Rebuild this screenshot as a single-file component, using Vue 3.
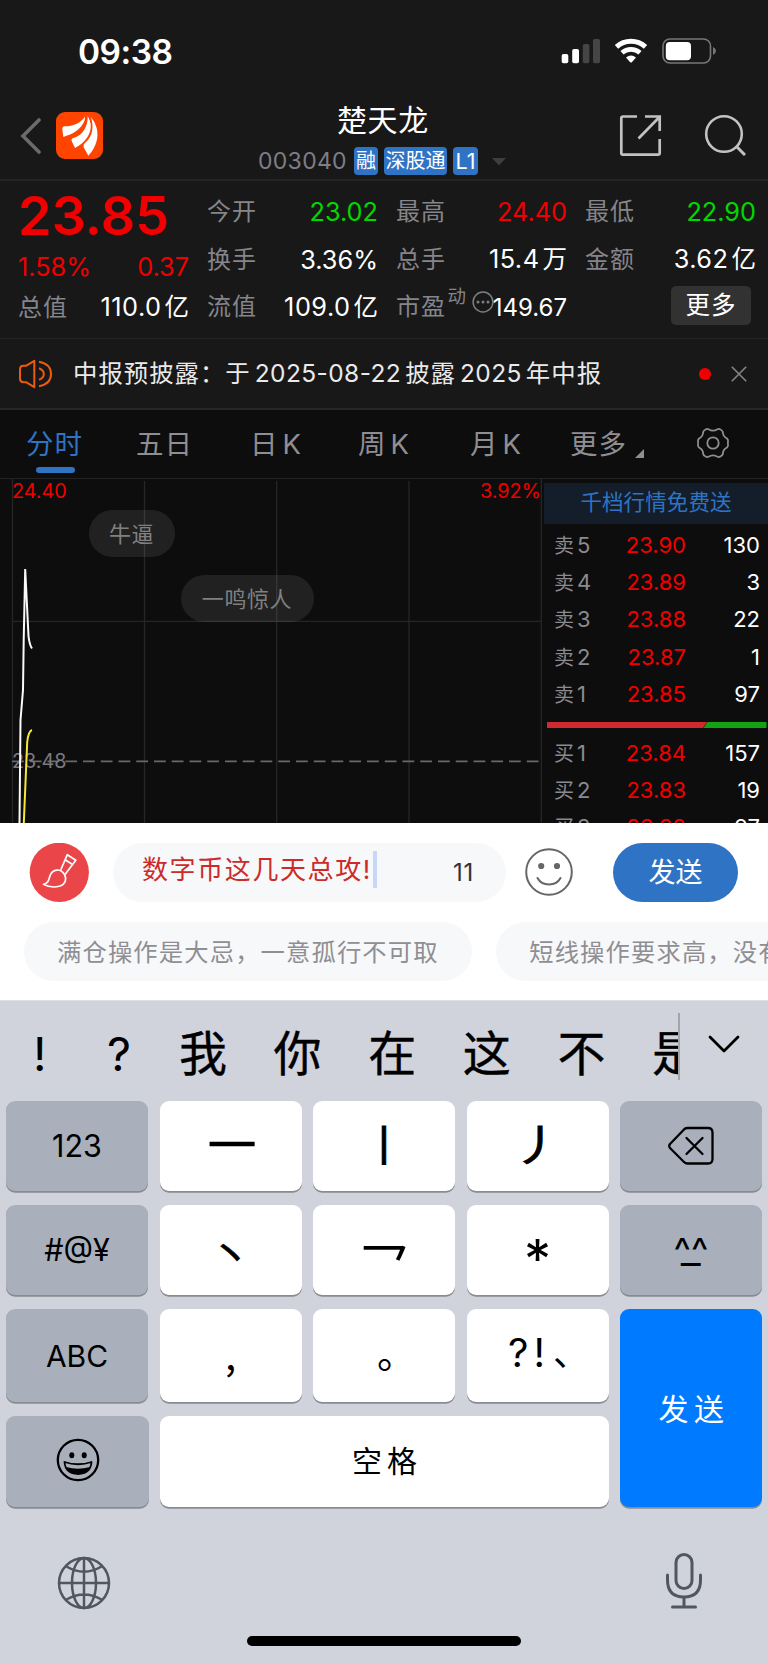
<script setup>
const columns = [
  [
    { label: '今开', value: '23.02', tone: 'green' },
    { label: '换手', value: '3.36%' },
    { label: '流值', value: '109.0', unit: '亿' },
  ],
  [
    { label: '最高', value: '24.40', tone: 'red' },
    { label: '总手', value: '15.4', unit: '万' },
    { label: '市盈', value: '149.67', sup: '动' },
  ],
  [
    { label: '最低', value: '22.90', tone: 'green' },
    { label: '金额', value: '3.62', unit: '亿' },
    { button: '更多' },
  ],
]
const sells = [
  ['5', '23.90', '130'],
  ['4', '23.89', '3'],
  ['3', '23.88', '22'],
  ['2', '23.87', '1'],
  ['1', '23.85', '97'],
]
const buys = [
  ['1', '23.84', '157'],
  ['2', '23.83', '19'],
  ['3', '23.82', '97'],
]
const candidates = ['我', '你', '在', '这', '不', '是']
</script>

<template>
  <div class="screen">
    <div class="status">
      <span class="clock">09:38</span>
      <svg class="status-icons" width="156" height="28" viewBox="0 0 156 28">
        <g fill="#fff">
          <rect x="1.7" y="17" width="6.6" height="9.2" rx="1.8" />
          <rect x="12.2" y="12" width="6.8" height="14.2" rx="1.8" />
          <rect x="22.8" y="7" width="6.6" height="19.2" rx="1.8" fill="#454545" />
          <rect x="33" y="2" width="7" height="24.2" rx="1.8" fill="#454545" />
        </g>
        <g fill="none" stroke="#fff" stroke-width="5">
          <path d="M56.500 9.800 A21.500 21.500 0 0 1 85.500 9.800" />
          <path d="M62 15.800 A13.500 13.500 0 0 1 80 15.800" stroke-width="4.600" />
        </g>
        <path d="M66 20.500 Q71 16.500 76 20.500 L71.800 25.200 Q71 26 70.200 25.200 Z" fill="#fff" />
        <rect x="103" y="2" width="47.500" height="24" rx="7" fill="none" stroke="#777" stroke-width="1.600" />
        <rect x="105.800" y="5" width="25.200" height="18.200" rx="4" fill="#fff" />
        <path d="M153 10 Q156 11.500 156 14 Q156 16.500 153 18 Z" fill="#777" />
      </svg>
    </div>

    <header class="header">
      <svg class="back" width="22" height="36" viewBox="0 0 22 36">
        <path d="M20 2 L4 18 L20 34" fill="none" stroke="#6b6b6b" stroke-width="3.600" stroke-linecap="round" />
      </svg>
      <svg class="logo" width="47" height="47" viewBox="0 0 141 141">
        <rect width="141" height="141" rx="27" fill="#ff4400" />
        <g fill="#fff">
          <path d="M19 52 Q18 44 26 43 C52 42 72 34 87 14 Q88 24 82 34 C68 58 48 66 22 75 Z" />
          <path d="M95 11 C96 45 80 70 50 79 Q45 81 47 87 L57 108 C85 94 108 66 104 36 Q101 22 95 11 Z" />
          <path d="M104 14 C114 42 112 72 86 94 Q80 100 83 106 L97 131 C121 106 129 75 122 48 Q116 27 104 14 Z" />
        </g>
      </svg>
      <div class="title">
        <h1>楚天龙</h1>
        <div class="sub">
          <span class="code">003040</span>
          <span class="badge b1">融</span>
          <span class="badge b2">深股通</span>
          <span class="badge b3">L1</span>
          <svg class="caret" width="14" height="8" viewBox="0 0 14 8"><path d="M0 0H14L7 7.500Z" fill="#3e3e3e" /></svg>
        </div>
      </div>
      <svg class="share" width="43" height="43" viewBox="0 0 43 43">
        <g fill="none" stroke="#c2c2c2" stroke-width="2.700">
          <path d="M18 2.500 H4 Q2.300 2.500 2.300 4.200 V39 Q2.300 40.700 4 40.700 H39 Q40.700 40.700 40.700 39 V25" />
          <path d="M26 2.500 H40.700 V17 M40 3.500 L19.500 24.500" />
        </g>
      </svg>
      <svg class="search" width="42" height="42" viewBox="0 0 42 42">
        <circle cx="20" cy="20" r="17.800" fill="none" stroke="#c2c2c2" stroke-width="2.600" />
        <path d="M32.500 32.500 L41 41" stroke="#c2c2c2" stroke-width="3" />
      </svg>
    </header>

    <section class="stats">
      <div class="col">
        <div class="price">23.85</div>
        <div class="row change red"><span>1.58%</span><span>0.37</span></div>
        <div class="row last"><span class="label">总值</span><span class="value wide">110.0<i>亿</i></span></div>
      </div>
      <div v-for="(col, c) in columns" :key="c" class="col">
        <div v-for="(cell, r) in col" :key="r" class="row">
          <template v-if="cell.button"><span class="more">{{ cell.button }}</span></template>
          <template v-else>
            <span class="label">{{ cell.label }}</span>
            <sup v-if="cell.sup" class="dyn">{{ cell.sup }}</sup>
            <svg v-if="cell.sup" class="dots" width="22" height="22" viewBox="0 0 22 22">
              <circle cx="11" cy="11" r="9.900" fill="none" stroke="#7e7e82" stroke-width="1.500" />
              <g fill="#7e7e82"><circle cx="6" cy="11" r="1.500" /><circle cx="11" cy="11" r="1.500" /><circle cx="16" cy="11" r="1.500" /></g>
            </svg>
            <span class="value" :class="[cell.tone, { small: cell.sup, wide: cell.unit }]">{{ cell.value }}<i v-if="cell.unit">{{ cell.unit }}</i></span>
          </template>
        </div>
      </div>
    </section>

    <section class="notice">
      <svg class="horn" width="35" height="30" viewBox="0 0 35 30">
        <g fill="none" stroke="#ee5a0c" stroke-width="2" stroke-linejoin="round">
          <path d="M16.300 1.800 L8 6.800 H5.500 Q2 6.800 2 10.200 V19.800 Q2 23.200 5.500 23.200 H8 L16.300 28.200 Z" />
          <path d="M21 9.200 Q25.800 11 25.800 15 Q25.800 19 21 20.800 M21 2.800 Q33 5 33 15 Q33 25 21 27.200" />
        </g>
      </svg>
      <p>中报预披露：于<b>2025-08-22</b>披露<b>2025</b>年中报</p>
      <span class="red-dot"></span>
      <svg class="close" width="16" height="16" viewBox="0 0 16 16"><path d="M0.800 0.800 L15.200 15.200 M15.200 0.800 L0.800 15.200" stroke="#858585" stroke-width="1.600" /></svg>
    </section>

    <nav class="tabs">
      <span class="tab t1">分时</span>
      <span class="tab t2">五日</span>
      <span class="tab t3">日<i>K</i></span>
      <span class="tab t4">周<i>K</i></span>
      <span class="tab t5">月<i>K</i></span>
      <span class="tab t6">更多<svg width="9" height="9" viewBox="0 0 9 9"><path d="M9 0 V9 H0 Z" fill="#8e8e93" /></svg></span>
      <svg class="gear" width="34" height="32" viewBox="0 0 34 32">
        <g fill="none" stroke="#8e8e93" stroke-width="1.800" stroke-linejoin="round">
          <circle cx="17" cy="16" r="5.700" />
          <path d="M9.600 2.500 Q11 1.500 12.500 2.200 Q17 5 21.500 2.200 Q23 1.500 24.400 2.500 Q26.500 3.500 26.800 5 Q27 9.700 31 11.500 Q32.500 12.800 32 15 Q31.800 16 32 17 Q32.500 19.200 31 20.500 Q27 22.300 26.800 27 Q26.500 28.500 24.400 29.500 Q23 30.500 21.500 29.800 Q17 27 12.500 29.800 Q11 30.500 9.600 29.500 Q7.500 28.500 7.200 27 Q7 22.300 3 20.500 Q1.500 19.200 2 17 Q2.200 16 2 15 Q1.500 12.800 3 11.500 Q7 9.700 7.200 5 Q7.500 3.500 9.600 2.500 Z" />
        </g>
      </svg>
    </nav>

    <section class="market">
      <div class="chart">
        <svg width="542" height="344" viewBox="0 479 542 344">
          <g stroke="#262627" stroke-width="1.300">
            <path d="M12.500 479 V823 M144.500 481 V823 M276.700 481 V823 M409 481 V823 M541.300 479 V823 M12 621.300 H541" />
          </g>
          <path d="M12 761.300 H541" stroke="#68686d" stroke-width="1.800" stroke-dasharray="11.800 5.950" />
        </svg>
        <div class="axis"><span class="red">24.40</span><span class="red pct">3.92%</span></div>
        <span class="mid">23.48</span>
        <span class="pill p1">牛逼</span>
        <span class="pill p2">一鸣惊人</span>
        <svg class="lines" width="542" height="344" viewBox="0 479 542 344">
          <path d="M19.500 823 L20.500 720 L23 690 L23.700 640 L25.200 569 L28.500 636 Q29.500 645 32 648.500" fill="none" stroke="#fafafa" stroke-width="2" />
          <path d="M23.800 823 L27.200 742 Q28.500 731 32 730" fill="none" stroke="#f5e63a" stroke-width="2" />
        </svg>
      </div>
      <div class="book">
        <div class="promo">千档行情免费送</div>
        <div v-for="s in sells" :key="'s' + s[0]" class="level">
          <span class="side">卖<i>{{ s[0] }}</i></span><span class="px red">{{ s[1] }}</span><span class="qty">{{ s[2] }}</span>
        </div>
        <svg class="ratio" width="220" height="6" viewBox="0 0 220 6">
          <path d="M0 0 H160 L156 6 H0Z" fill="#cf2b2e" /><path d="M160.500 0 H219.500 V6 H156.500Z" fill="#12a312" />
        </svg>
        <div v-for="b in buys" :key="'b' + b[0]" class="level">
          <span class="side">买<i>{{ b[0] }}</i></span><span class="px red">{{ b[1] }}</span><span class="qty">{{ b[2] }}</span>
        </div>
      </div>
    </section>

    <section class="composer">
      <div class="input-row">
        <svg class="brush" width="60" height="60" viewBox="0 0 60 60">
          <circle cx="30.300" cy="29.300" r="29.600" fill="#ea4649" />
          <g fill="none" stroke="#fff" stroke-width="1.700" stroke-linejoin="round" stroke-linecap="round">
            <path d="M31.500 27.500 L38.300 11.700 L46.800 17.300 L36 31.500 M36.500 17 L43.500 21.500" />
            <path d="M35.500 31.500 C38 36 36.500 41 31 43 C26 44.500 19 43.800 14.500 41.300 C20 40.500 19.500 36 21.500 31.500 C24 26.500 31 25.500 34 29.500 Z" />
          </g>
        </svg>
        <div class="input">
          <span class="typed">数字币这几天总攻!</span><span class="cursor"></span><span class="count">11</span>
        </div>
        <svg class="smile" width="48" height="48" viewBox="0 0 48 48">
          <g fill="none" stroke="#666" stroke-width="2" stroke-linecap="round"><circle cx="24" cy="24" r="22.800" /><path d="M12.500 30 Q16 36.500 24 36.500 Q32 36.500 35.500 30" /></g>
          <circle cx="16.200" cy="18" r="3.100" fill="#666" /><circle cx="32" cy="18" r="3.100" fill="#666" />
        </svg>
        <span class="send">发送</span>
      </div>
      <div class="chips">
        <span class="chip">满仓操作是大忌，一意孤行不可取</span>
        <span class="chip">短线操作要求高，没有把握</span>
      </div>
    </section>

    <section class="keyboard">
      <div class="cands">
        <div class="cand-list">
          <span class="c-bang">!</span><span class="c-q">?</span>
          <span v-for="w in candidates" :key="w" class="cand">{{ w }}</span>
        </div>
        <svg class="expand" width="32" height="19" viewBox="0 0 32 19"><path d="M2 2 L16 16 L30 2" fill="none" stroke="#000" stroke-width="2.800" stroke-linecap="round" stroke-linejoin="round" /></svg>
      </div>
      <div class="keys">
        <div class="key fn">123</div>
        <div class="key stroke heng"><span>一</span></div>
        <div class="key stroke shu"><span>丨</span></div>
        <div class="key stroke pie"><span>丿</span></div>
        <div class="key fn">
          <svg width="46" height="40" viewBox="0 0 46 40">
            <g fill="none" stroke="#000" stroke-width="2.300" stroke-linecap="round" stroke-linejoin="round">
              <path d="M19.500 2 H40 Q44.500 2 44.500 6.500 V33 Q44.500 37.500 40 37.500 H19.500 Q17.500 37.500 16 36 L2 22 Q0.500 20 2 18 L16 3.500 Q17 2 19.500 2 Z" />
              <path d="M18.500 12 L34.500 28 M34.500 12 L18.500 28" />
            </g>
          </svg>
        </div>
        <div class="key fn">#@¥</div>
        <div class="key stroke dian"><span>丶</span></div>
        <div class="key stroke zhe"><span>乛</span></div>
        <div class="key star">*</div>
        <div class="key fn face"><span class="eyes">^^</span><span class="mouth">_</span></div>
        <div class="key fn abc">ABC</div>
        <div class="key comma">,</div>
        <div class="key stop">。</div>
        <div class="key punct"><span>?!</span><span class="dun">、</span></div>
        <div class="key go">发送</div>
        <div class="key fn emoji">
          <svg width="44" height="44" viewBox="0 0 44 44">
            <circle cx="22" cy="22" r="20.200" fill="none" stroke="#000" stroke-width="2.300" />
            <ellipse cx="15.800" cy="17.200" rx="2.500" ry="3" /><ellipse cx="28.200" cy="17.200" rx="2.500" ry="3" />
            <path d="M8.500 24 Q22 28.500 35.500 24 Q34.500 36 22 36 Q9.500 36 8.500 24 Z" fill="none" stroke="#000" stroke-width="1.800" stroke-linejoin="round" />
            <path d="M10 29 Q22 32.500 34 29 Q31 36 22 36 Q13 36 10 29 Z" />
          </svg>
        </div>
        <div class="key space">空格</div>
      </div>
      <div class="bottom">
        <svg width="54" height="54" viewBox="0 0 54 54">
          <g fill="none" stroke="#51575f" stroke-width="2.500">
            <circle cx="27" cy="27" r="25" /><ellipse cx="27" cy="27" rx="12" ry="25" />
            <path d="M27 2 V52 M2 27 H52 M9.500 10.500 Q27 21 44.500 10.500 M9.500 43.500 Q27 33.500 44.500 43.500" />
          </g>
        </svg>
        <svg class="mic" width="40" height="58" viewBox="0 0 40 58">
          <g fill="none" stroke="#51575f" stroke-width="3" stroke-linecap="round">
            <rect x="12" y="2.500" width="16" height="34" rx="8" /><path d="M3.500 23 V28 Q3.500 45 20 45 Q36.500 45 36.500 28 V23 M20 45 V55 M8.500 55 H31.500" />
          </g>
        </svg>
      </div>
      <div class="home"></div>
    </section>
  </div>
</template>

<style>
html, body { margin: 0; background: #181818; }
</style>

<style scoped>
.screen { width: 768px; height: 1663px; overflow: hidden; background: #181818; color: #fff; font-family: Inter, "Noto Sans CJK SC", sans-serif; line-height: 1; }
.screen * { box-sizing: border-box; }
i, b { font-style: normal; font-weight: 400; }
h1, p { margin: 0; font-weight: 400; }
svg { display: block; flex: none; }
span { white-space: nowrap; }
.red { color: #f00000; }
.green { color: #00d800; }

.status { height: 103px; display: flex; padding: 0 52px 0 78px; justify-content: space-between; }
.clock { font-size: 33.500px; font-weight: 600; line-height: 104px; letter-spacing: -0.5px; }
.status-icons { margin-top: 37px; }

.header { height: 78px; display: flex; border-bottom: 2px solid #242424; }
.back { margin: 15px 0 0 19px; }
.logo { margin: 9px 0 0 15px; }
.title { width: 258px; margin-left: 146px; display: flex; flex-direction: column; }
h1 { margin-left: 88px; font-size: 30px; line-height: 34px; height: 44px; letter-spacing: 0.6px; }
.sub { display: flex; align-items: center; height: 28px; }
.code { width: 96px; margin-left: 9px; font-size: 23px; line-height: 28px; color: #7e7e86; letter-spacing: 0.3px; }
.badge { height: 28px; border-radius: 4px; background: #2f73c4; font-size: 20px; line-height: 28px; text-align: center; margin-right: 6px; flex: none; }
.b1 { width: 24px; }
.b2 { width: 63px; }
.b3 { width: 25px; font-size: 21.500px; }
.caret { margin-left: 8px; margin-top: 1px; }
.share { margin: 11px 0 0 112px; }
.search { margin: 11px 0 0 42px; }

.stats { height: 158px; display: flex; gap: 18px; padding: 7px 0 0 18px; border-bottom: 1px solid #232323; }
.col { width: 171px; flex: none; }
.row { height: 47.500px; display: flex; align-items: center; justify-content: space-between; font-size: 25.300px; line-height: 47px; }
.price { height: 54px; line-height: 56px; font-size: 54px; font-weight: 600; color: #f00000; }
.change { height: 48px; }
.last { height: 34px; }
.label { color: #85858a; font-size: 24px; letter-spacing: 1px; }
.value.wide { letter-spacing: 0.5px; }
.value i { font-size: 24.500px; margin-left: 3px; letter-spacing: 0; }
.dyn { font-size: 18.500px; line-height: 18px; color: #85858a; margin: -22px 0 0 -1px; }
.dots { margin: -9px -4px 0 4px; }
.value.small { font-size: 24px; padding-top: 2px; }
.more { width: 80px; height: 39px; margin: -3px 0 0 86px; border-radius: 5px; background: #323232; text-align: center; line-height: 38px; font-size: 24.500px; letter-spacing: 1px; }

.notice { height: 71px; display: flex; align-items: center; padding-left: 18px; border-bottom: 2px solid #262626; }
.notice p { width: 540px; margin-left: 20px; font-size: 24.400px; letter-spacing: 1px; color: #eaeaea; white-space: nowrap; }
.notice b { margin: 0 4px 0 4px; font-size: 24.500px; letter-spacing: 0.4px; }
.red-dot { width: 12px; height: 12px; border-radius: 6px; background: #f00000; margin-left: 86px; }
.close { margin-left: 20px; }

.tabs { height: 69px; background: #0d0d0d; display: grid; grid-template-columns: 110px 114px 108px 112px 100px 118px 1fr; padding-left: 26px; border-bottom: 1px solid #222; font-size: 27.500px; line-height: 69px; color: #8e8e93; }
.tab { letter-spacing: 1px; position: relative; display: flex; }
.tab i { margin-left: 4px; }
.t1 { color: #2f73c4; }
.t1::after { content: ""; position: absolute; left: 10px; top: 57px; width: 39px; height: 6px; border-radius: 3px; background: #2f73c4; }
.tab svg { margin: 39px 0 0 8px; }
.gear { margin: 17px 0 0 8px; }

.market { height: 344px; display: flex; background: #0d0d0d; overflow: hidden; }
.chart { width: 544px; position: relative; flex: none; }
.chart svg { position: absolute; left: 0; top: 0; }
.axis { position: absolute; left: 12px; right: 3px; top: 2px; display: flex; justify-content: space-between; font-size: 19.800px; line-height: 20px; }
.mid { position: absolute; left: 12px; top: 272px; font-size: 19.800px; line-height: 20px; color: #7a7a80; }
.pill { position: absolute; height: 47px; border-radius: 24px; background: rgba(255, 255, 255, 0.085); color: #808080; font-size: 22px; line-height: 49px; text-align: center; letter-spacing: 0.6px; padding-right: 1px; }
.p1 { left: 89px; top: 31px; width: 86px; }
.p2 { left: 181px; top: 96px; width: 133px; }
.book { width: 224px; padding-top: 4px; }
.promo { height: 41px; margin-bottom: 3px; background: #131e2a; color: #2f73c4; font-size: 21.500px; line-height: 38px; text-align: center; letter-spacing: 0.1px; }
.level { height: 37.200px; line-height: 37px; display: flex; font-size: 22px; padding-right: 8px; }
.side { width: 62px; padding-left: 10px; font-size: 20px; color: #8a8a8f; }
.side i { margin-left: 3px; font-size: 22px; }
.px { width: 80px; text-align: right; }
.qty { flex: 1; text-align: right; }
.ratio { margin: 9px 0 7px 3px; }

.composer { height: 177px; background: #fff; overflow: hidden; }
.input-row { display: flex; padding: 20px 0 0 29px; height: 80px; }
.input { width: 393px; height: 59px; margin-left: 24px; border-radius: 30px; background: #f7f8fa; display: flex; padding-left: 29px; }
.typed { width: 231px; font-size: 26px; letter-spacing: 1.600px; line-height: 54px; color: #cd2a2a; }
.cursor { width: 4px; height: 37px; margin-top: 8px; background: #c9d6f8; border-radius: 1px; }
.count { margin-left: 76px; font-size: 24px; line-height: 60px; color: #333; letter-spacing: 0.8px; }
.smile { margin: 5px 0 0 19px; }
.send { width: 125px; height: 59px; margin-left: 40px; border-radius: 30px; background: #2f73c4; text-align: center; font-size: 27px; line-height: 60px; }
.chips { display: flex; gap: 24px; padding: 19px 0 0 24px; }
.chip { flex: none; height: 59px; border-radius: 30px; background: #f7f8fa; padding: 0 33.500px 0 33px; color: #8e8e93; font-size: 24.300px; letter-spacing: 1.150px; line-height: 60px; }

.keyboard { height: 663px; background: #d0d3db; color: #000; border-top: 1px solid #dcdfe5; }
.cands { height: 99px; display: flex; }
.cand-list { width: 680px; height: 67px; margin-top: 12px; display: flex; overflow: hidden; border-right: 2px solid #a3a5ab; font-size: 47px; line-height: 81px; }
.c-bang { width: 69px; margin-left: 33px; flex: none; }
.c-q { width: 72px; margin-left: 5px; flex: none; }
.cand { width: 94.600px; flex: none; font-size: 48px; line-height: 82px; -webkit-text-stroke: 0.4px #000; }
.expand { margin: 34px 0 0 28px; }
.keys { display: grid; grid-template-columns: repeat(5, 142px); grid-template-rows: 90.500px 90.500px 92.500px 91px; column-gap: 11.500px; row-gap: 13.900px; padding: 0.5px 0 0 6px; }
.key { border-radius: 9px; background: #fff; box-shadow: 0 1.700px 0 #898b90; display: flex; align-items: center; justify-content: center; font-size: 31px; line-height: 1; }
.fn { background: #a9afbb; font-size: 30.500px; }
.abc { font-size: 30px; }
.stroke { -webkit-text-stroke: 0.5px #000; }
.heng { font-size: 48.500px; padding-left: 3px; }
.shu { font-size: 42px; -webkit-text-stroke: 1px #000; }
.pie { font-size: 43px; -webkit-text-stroke: 0.8px #000; }
.pie span { transform: scaleX(1.18); }
.dian { font-size: 42px; padding-top: 9px; }
.zhe { font-size: 50px; padding-top: 33px; -webkit-text-stroke: 0; }
.star { font-size: 54px; padding-top: 18px; }
.face { flex-direction: column; }
.eyes { font-size: 37px; height: 20px; line-height: 44px; }
.mouth { font-size: 38px; height: 22px; line-height: 0; transform: scaleX(1.15); }
.comma { font-size: 40px; font-family: "Noto Sans CJK SC", sans-serif; padding-bottom: 6px; }
.stop { font-size: 39px; padding: 0 0 5px 25px; }
.punct { font-size: 40px; letter-spacing: 5px; padding: 0 0 6px 13px; }
.dun { font-size: 36px; letter-spacing: 0; width: 30px; padding-left: 3px; }
.go { grid-row: 3 / span 2; grid-column: 5; background: #007aff; color: #fff; font-size: 30px; letter-spacing: 5.500px; padding: 2px 0 0 6px; }
.emoji { width: 143px; padding-bottom: 2px; }
.space { grid-column: 2 / span 3; font-size: 30px; letter-spacing: 5px; padding-left: 6px; }
.bottom { display: flex; justify-content: space-between; padding: 49px 64px 0 57px; height: 129px; }
.mic { margin-top: -4px; }
.home { width: 274px; height: 10px; border-radius: 5px; background: #000; margin-left: 247px; }
</style>
